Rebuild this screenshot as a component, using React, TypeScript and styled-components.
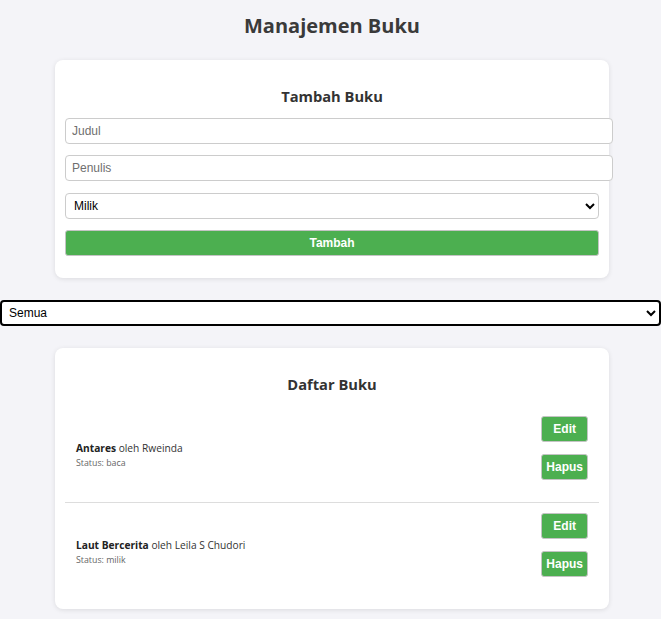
import React from "react";
import styled, { createGlobalStyle } from "styled-components";

const GlobalStyle = createGlobalStyle`
  html, body {
    margin: 0;
    padding: 0;
    background: #f4f4f8;
    font-family: "Open Sans", "Noto Sans", sans-serif;
    color: #333;
  }
`;

const Page = styled.div`
  padding: 0 0 10px 3px;
`;

const Title = styled.h1`
  margin: 0;
  padding: 11px 0 19px;
  text-align: center;
  font-size: 20px;
  line-height: 30px;
  font-weight: 700;
  color: #3a3a3a;
`;

const Card = styled.section`
  width: 534px;
  margin: 0 auto;
  padding: 10px;
  background: #fff;
  border-radius: 8px;
  box-shadow: 0 1px 5px rgba(0, 0, 0, 0.1);
`;

const CardTitle = styled.h2`
  margin: 15px 0 11px;
  text-align: center;
  font-size: 14.7px;
  line-height: 22px;
  font-weight: 700;
  color: #333;
`;

const TextInput = styled.input`
  display: block;
  width: 100%;
  height: 14px;
  margin: 0 0 11px;
  padding: 5px 6px;
  border: 1px solid #ccc;
  border-radius: 4px;
  font-family: "Liberation Sans", Arial, sans-serif;
  font-size: 12px;
  color: #333;
  background: #fff;
  &::placeholder {
    color: #6f6f6f;
  }
`;

const FormSelect = styled.select`
  display: block;
  width: 100%;
  height: 26px;
  margin: 12px 0 11px;
  padding: 0 4px;
  border: 1px solid #ccc;
  border-radius: 4px;
  font-family: "Liberation Sans", Arial, sans-serif;
  font-size: 12px;
  color: #000;
  background: #fff;
`;

const GreenButton = styled.button<{ $block?: boolean }>`
  display: block;
  width: ${(p) => (p.$block ? "100%" : "auto")};
  height: 26px;
  padding: 0 4px;
  border: 1px solid #c4c4c4;
  border-radius: 3px;
  background: #4caf50;
  color: #fff;
  font-family: "Liberation Sans", Arial, sans-serif;
  font-size: 12px;
  font-weight: 700;
  cursor: pointer;
`;

const FormFooter = styled.div`
  padding-bottom: 12px;
`;

const FilterSelect = styled.select`
  display: block;
  width: calc(100% + 3px);
  height: 26px;
  margin: 22px 0 22px -3px;
  padding: 0 3px;
  border: 2px solid #000;
  border-radius: 4px;
  font-family: "Liberation Sans", Arial, sans-serif;
  font-size: 12px;
  color: #000;
  background: #fff;
`;

const List = styled.div`
  display: flex;
  flex-direction: column;
`;

const Item = styled.div<{ $last?: boolean }>`
  display: flex;
  justify-content: space-between;
  align-items: center;
  padding: 10px 11px 11px;
  border-bottom: ${(p) => (p.$last ? "none" : "1px solid #ddd")};
`;

const Info = styled.div`
  display: flex;
  flex-direction: column;
  padding-top: 4px;
`;

const BookLine = styled.div`
  font-size: 10.2px;
  line-height: 15px;
  color: #333;
  b {
    font-weight: 700;
    color: #222;
  }
`;

const Status = styled.div`
  font-size: 8.8px;
  line-height: 14px;
  color: #666;
`;

const Actions = styled.div`
  display: flex;
  flex-direction: column;
  gap: 12px;
  padding-bottom: 11px;
`;

const books = [
  { title: "Antares", author: "Rweinda", status: "baca" },
  { title: "Laut Bercerita", author: "Leila S Chudori", status: "milik" },
];

export default function App() {
  return (
    <Page>
      <GlobalStyle />
      <Title>Manajemen Buku</Title>
      <Card>
        <CardTitle>Tambah Buku</CardTitle>
        <TextInput placeholder="Judul" />
        <TextInput placeholder="Penulis" />
        <FormSelect defaultValue="milik">
          <option value="milik">Milik</option>
          <option value="baca">Baca</option>
          <option value="beli">Beli</option>
        </FormSelect>
        <FormFooter>
          <GreenButton $block>Tambah</GreenButton>
        </FormFooter>
      </Card>
      <FilterSelect defaultValue="semua">
        <option value="semua">Semua</option>
        <option value="milik">Milik</option>
        <option value="baca">Baca</option>
      </FilterSelect>
      <Card>
        <CardTitle>Daftar Buku</CardTitle>
        <List>
          {books.map((b, i) => (
            <Item key={b.title} $last={i === books.length - 1}>
              <Info>
                <BookLine>
                  <b>{b.title}</b> oleh {b.author}
                </BookLine>
                <Status>Status: {b.status}</Status>
              </Info>
              <Actions>
                <GreenButton>Edit</GreenButton>
                <GreenButton>Hapus</GreenButton>
              </Actions>
            </Item>
          ))}
        </List>
      </Card>
    </Page>
  );
}
